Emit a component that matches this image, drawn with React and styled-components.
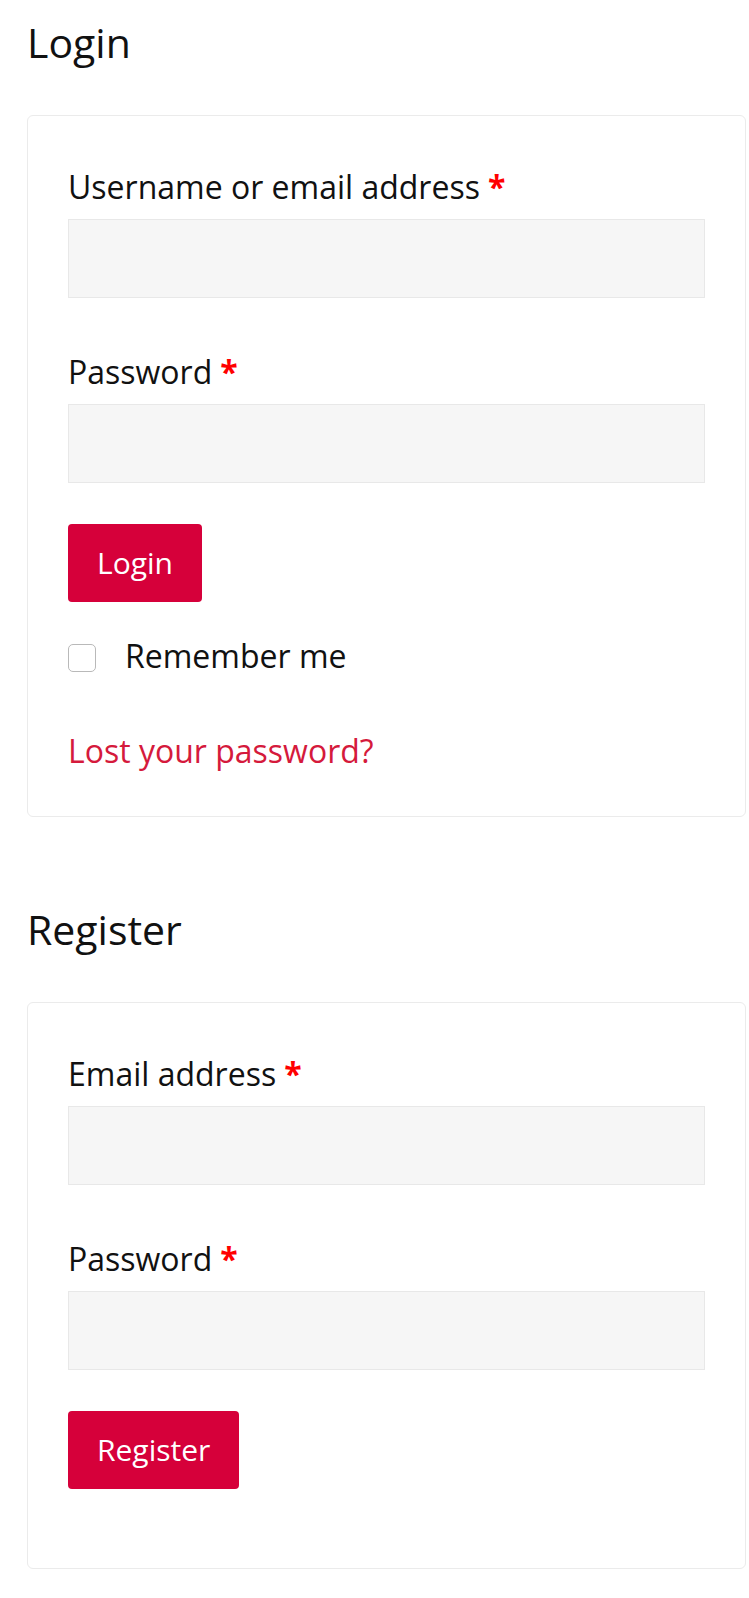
import React from "react";
import styled, { createGlobalStyle } from "styled-components";

const GlobalStyle = createGlobalStyle`
  body {
    margin: 0;
    background: #ffffff;
    font-family: "Open Sans", "Noto Sans", sans-serif;
    color: #111111;
  }
`;

const Page = styled.div`
  padding: 18px 3px 30px 27px;
`;

const Heading = styled.h2`
  font-size: 41px;
  font-weight: 400;
  line-height: 48px;
  margin: ${(props) => (props.$first ? "0" : "88px")} 0 49px;
`;

const Card = styled.form`
  border: 1.5px solid #ebebeb;
  border-radius: 6px;
  padding: 48px 40px ${(props) => (props.$extra ? "79px" : "42px")};
`;

const Row = styled.div`
  display: flex;
  flex-direction: column;
  gap: 9px;
  margin-bottom: ${(props) => props.$gap || "41px"};
`;

const Label = styled.label`
  font-size: 32px;
  line-height: 46px;
`;

const Required = styled.span`
  color: #ff0000;
  font-weight: 700;
  margin-left: 8px;
`;

const Input = styled.input`
  box-sizing: border-box;
  height: 79px;
  width: 100%;
  background: #f6f6f6;
  border: 1px solid #e8e8e8;
  outline: none;
`;

const Button = styled.button`
  font-family: inherit;
  font-size: 30px;
  line-height: 45px;
  padding: 16px 29px 17px;
  background: #d6003a;
  color: #ffffff;
  border: none;
  border-radius: 4px;
  align-self: flex-start;
`;

const Actions = styled.div`
  display: flex;
  flex-direction: column;
  align-items: flex-start;
`;

const CheckRow = styled.label`
  display: flex;
  align-items: center;
  gap: 29px;
  margin-top: 31px;
  font-size: 32px;
  line-height: 46px;
`;

const Box = styled.span`
  box-sizing: border-box;
  width: 28px;
  height: 28px;
  border: 1.5px solid #b9b9b9;
  border-radius: 5px;
  background: #fff;
  margin-top: 3px;
`;

const LostLink = styled.a`
  display: block;
  margin-top: 49px;
  font-size: 32px;
  line-height: 46px;
  color: #d51a3c;
  text-decoration: none;
`;

const Field = ({ label, type, gap }) => (
  <Row $gap={gap}>
    <Label>
      {label}
      <Required>*</Required>
    </Label>
    <Input type={type} />
  </Row>
);

export default function App() {
  return (
    <Page>
      <GlobalStyle />
      <Heading $first>Login</Heading>
      <Card>
        <Field label="Username or email address" type="text" gap="51px" />
        <Field label="Password" type="password" />
        <Actions>
          <Button type="button">Login</Button>
          <CheckRow>
            <Box />
            Remember me
          </CheckRow>
        </Actions>
        <LostLink href="#">Lost your password?</LostLink>
      </Card>

      <Heading>Register</Heading>
      <Card $extra>
        <Field label="Email address" type="email" gap="51px" />
        <Field label="Password" type="password" />
        <Actions>
          <Button type="button">Register</Button>
        </Actions>
      </Card>
    </Page>
  );
}
